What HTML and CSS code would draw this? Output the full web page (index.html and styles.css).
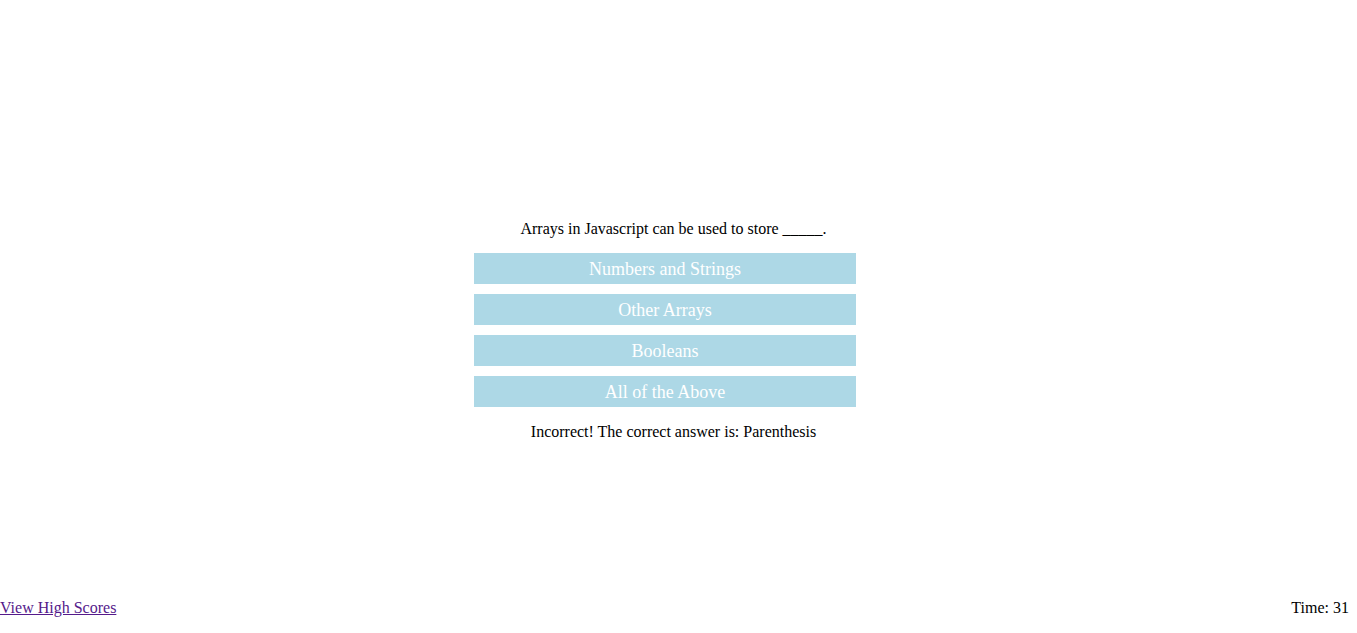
FILE: index.html
```html
<!DOCTYPE html>
<html>
<head>
<meta charset="utf-8">
<title>Quiz</title>
<link rel="stylesheet" href="styles.css">
</head>
<body>
<main class="quiz">
  <p class="question">Arrays in Javascript can be used to store _____.</p>
  <div class="choices">
    <button class="choice">Numbers and Strings</button>
    <button class="choice">Other Arrays</button>
    <button class="choice">Booleans</button>
    <button class="choice">All of the Above</button>
  </div>
  <p class="result">Incorrect! The correct answer is: Parenthesis</p>
</main>
<footer class="footer">
  <a class="scores" href="#">View High Scores</a>
  <span class="timer">Time: 31</span>
</footer>
</body>
</html>
```
FILE: styles.css
```css
html, body {
  margin: 0;
  height: 100%;
}
body {
  font-family: "Liberation Serif", "Times New Roman", serif;
  font-size: 16px;
  line-height: 18px;
  color: #000;
  background: #fff;
  display: flex;
  flex-direction: column;
}
.quiz {
  flex: 1;
  display: flex;
  flex-direction: column;
  align-items: center;
  padding: 219px 18px 0 8px;
}
.question, .result {
  margin: 0;
  text-align: center;
}
.question {
  padding-top: 1px;
}
.choices {
  display: flex;
  flex-direction: column;
  gap: 10px;
  margin: 15px 17px 16px 0;
}
.choice {
  width: 382px;
  height: 31px;
  border: none;
  padding: 1px 0 0;
  background: #add8e6;
  color: #fff;
  font-family: "Liberation Serif", "Times New Roman", serif;
  font-size: 18px;
  line-height: 30px;
}
.footer {
  display: flex;
  justify-content: space-between;
  padding: 0 8px 16px 0;
}
.scores {
  color: #551a8b;
}
```
